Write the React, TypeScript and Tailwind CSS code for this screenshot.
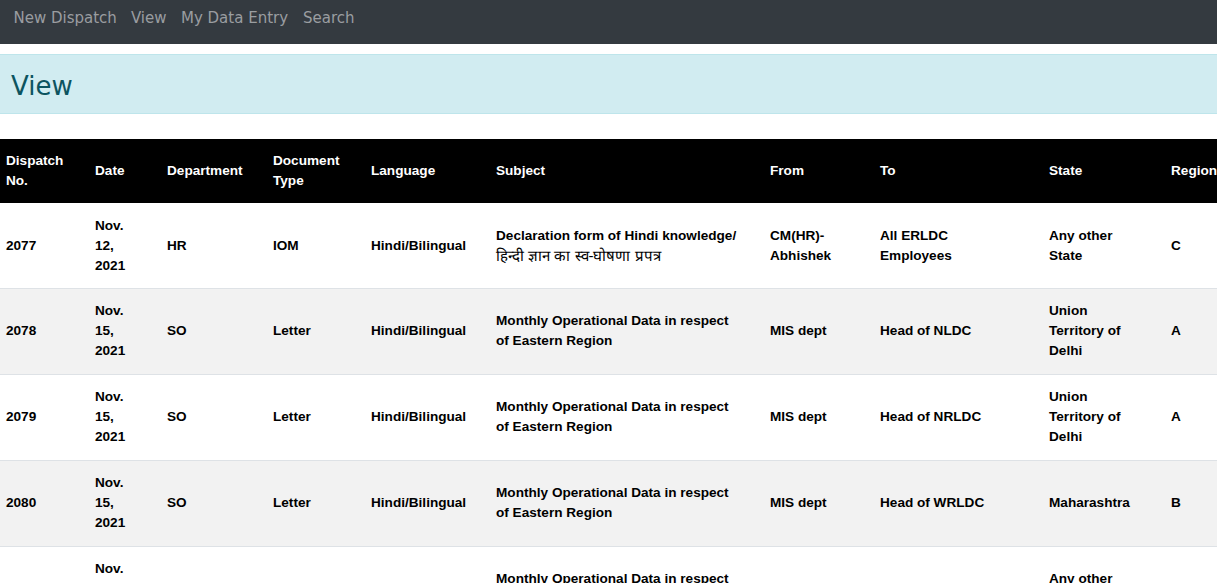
import React from 'react';

type Row = {
  no: string;
  date: string;
  dept: string;
  docType: string;
  lang: string;
  subject: React.ReactNode;
  from: string;
  to: string;
  state: string;
  region: string;
};

const rows: Row[] = [
  {
    no: '2077',
    date: 'Nov. 12, 2021',
    dept: 'HR',
    docType: 'IOM',
    lang: 'Hindi/Bilingual',
    subject: (
      <>
        Declaration form of Hindi knowledge/{' '}
        <span className="font-normal text-[15px]">हिन्दी ज्ञान का स्व-घोषणा प्रपत्र</span>
      </>
    ),
    from: 'CM(HR)-Abhishek',
    to: 'All ERLDC Employees',
    state: 'Any other State',
    region: 'C',
  },
  {
    no: '2078',
    date: 'Nov. 15, 2021',
    dept: 'SO',
    docType: 'Letter',
    lang: 'Hindi/Bilingual',
    subject: 'Monthly Operational Data in respect of Eastern Region',
    from: 'MIS dept',
    to: 'Head of NLDC',
    state: 'Union Territory of Delhi',
    region: 'A',
  },
  {
    no: '2079',
    date: 'Nov. 15, 2021',
    dept: 'SO',
    docType: 'Letter',
    lang: 'Hindi/Bilingual',
    subject: 'Monthly Operational Data in respect of Eastern Region',
    from: 'MIS dept',
    to: 'Head of NRLDC',
    state: 'Union Territory of Delhi',
    region: 'A',
  },
  {
    no: '2080',
    date: 'Nov. 15, 2021',
    dept: 'SO',
    docType: 'Letter',
    lang: 'Hindi/Bilingual',
    subject: 'Monthly Operational Data in respect of Eastern Region',
    from: 'MIS dept',
    to: 'Head of WRLDC',
    state: 'Maharashtra',
    region: 'B',
  },
  {
    no: '2081',
    date: 'Nov. 15, 2021',
    dept: 'SO',
    docType: 'Letter',
    lang: 'Hindi/Bilingual',
    subject: 'Monthly Operational Data in respect of Eastern Region',
    from: 'MIS dept',
    to: 'Head of SRLDC',
    state: 'Any other State',
    region: 'C',
  },
];

export default function App() {
  return (
    <div className="min-h-screen bg-white overflow-hidden" style={{ fontFamily: '"Liberation Sans", Arial, sans-serif' }}>
      {/* Top navbar */}
      <nav className="h-[44px] bg-[#343a40] flex items-start pt-[8px] px-[6.5px]" style={{ fontFamily: '"DejaVu Sans", Verdana, sans-serif' }}>
        <a className="px-[7px] text-[15px] leading-[20px] text-[#9a9da0]">New Dispatch</a>
        <a className="px-[7px] text-[15px] leading-[20px] text-[#9a9da0]">View</a>
        <a className="px-[7.5px] text-[15px] leading-[20px] text-[#9a9da0]">My Data Entry</a>
        <a className="px-[7.5px] text-[15px] leading-[20px] text-[#9a9da0]">Search</a>
      </nav>

      {/* Title banner */}
      <div className="mt-[10px] h-[60px] bg-[#d1ecf1] border-y border-[#bee5eb] flex items-center pt-[3px] px-[11px]">
        <h1 className="text-[26px] font-normal text-[#0c5460] leading-none" style={{ fontFamily: '"DejaVu Sans", Verdana, sans-serif' }}>
          View
        </h1>
      </div>

      {/* Dispatch table */}
      <div className="mt-[25px] -ml-[6px]">
        <table className="table-fixed border-collapse text-[13.6px] leading-[20px] font-bold text-black w-[1320px]">
          <colgroup>
            <col className="w-[89px]" />
            <col className="w-[72px]" />
            <col className="w-[106px]" />
            <col className="w-[98px]" />
            <col className="w-[125px]" />
            <col className="w-[274px]" />
            <col className="w-[110px]" />
            <col className="w-[169px]" />
            <col className="w-[122px]" />
            <col className="w-[155px]" />
          </colgroup>
          <thead>
            <tr className="bg-black text-white text-left">
              <th className="px-[12px] py-[12px] align-middle">Dispatch No.</th>
              <th className="px-[12px] py-[12px] align-middle">Date</th>
              <th className="px-[12px] py-[12px] align-middle">Department</th>
              <th className="px-[12px] py-[12px] align-middle">Document Type</th>
              <th className="px-[12px] py-[12px] align-middle">Language</th>
              <th className="px-[12px] py-[12px] align-middle">Subject</th>
              <th className="px-[12px] py-[12px] align-middle">From</th>
              <th className="px-[12px] py-[12px] align-middle">To</th>
              <th className="px-[12px] py-[12px] align-middle">State</th>
              <th className="px-[12px] py-[12px] align-middle">Region</th>
            </tr>
          </thead>
          <tbody>
            {rows.map((r, i) => {
              const py = i === 0 ? 'pt-[13px] pb-[12px]' : 'pt-[12px] pb-[13px]';
              return (
                <tr
                  key={r.no}
                  className={`${i % 2 === 1 ? 'bg-[#f2f2f2]' : 'bg-white'} ${i > 0 ? 'border-t border-[#dee2e6]' : ''}`}
                >
                  <td className={`pl-[12px] pr-[12px] ${py} align-middle`}>{r.no}</td>
                  <td className={`pl-[12px] pr-[12px] ${py} align-middle`}>{r.date}</td>
                  <td className={`pl-[12px] pr-[12px] ${py} align-middle`}>{r.dept}</td>
                  <td className={`pl-[12px] pr-[12px] ${py} align-middle`}>{r.docType}</td>
                  <td className={`pl-[12px] pr-[12px] ${py} align-middle`}>{r.lang}</td>
                  <td className={`pl-[12px] pr-[16px] ${py} align-middle`}>{r.subject}</td>
                  <td className={`pl-[12px] pr-[12px] ${py} align-middle`}>{r.from}</td>
                  <td className={`pl-[12px] pr-[16px] ${py} align-middle`}>{r.to}</td>
                  <td className={`pl-[12px] pr-[14px] ${py} align-middle`}>{r.state}</td>
                  <td className={`pl-[12px] pr-[12px] ${py} align-middle`}>{r.region}</td>
                </tr>
              );
            })}
          </tbody>
        </table>
      </div>
    </div>
  );
}
